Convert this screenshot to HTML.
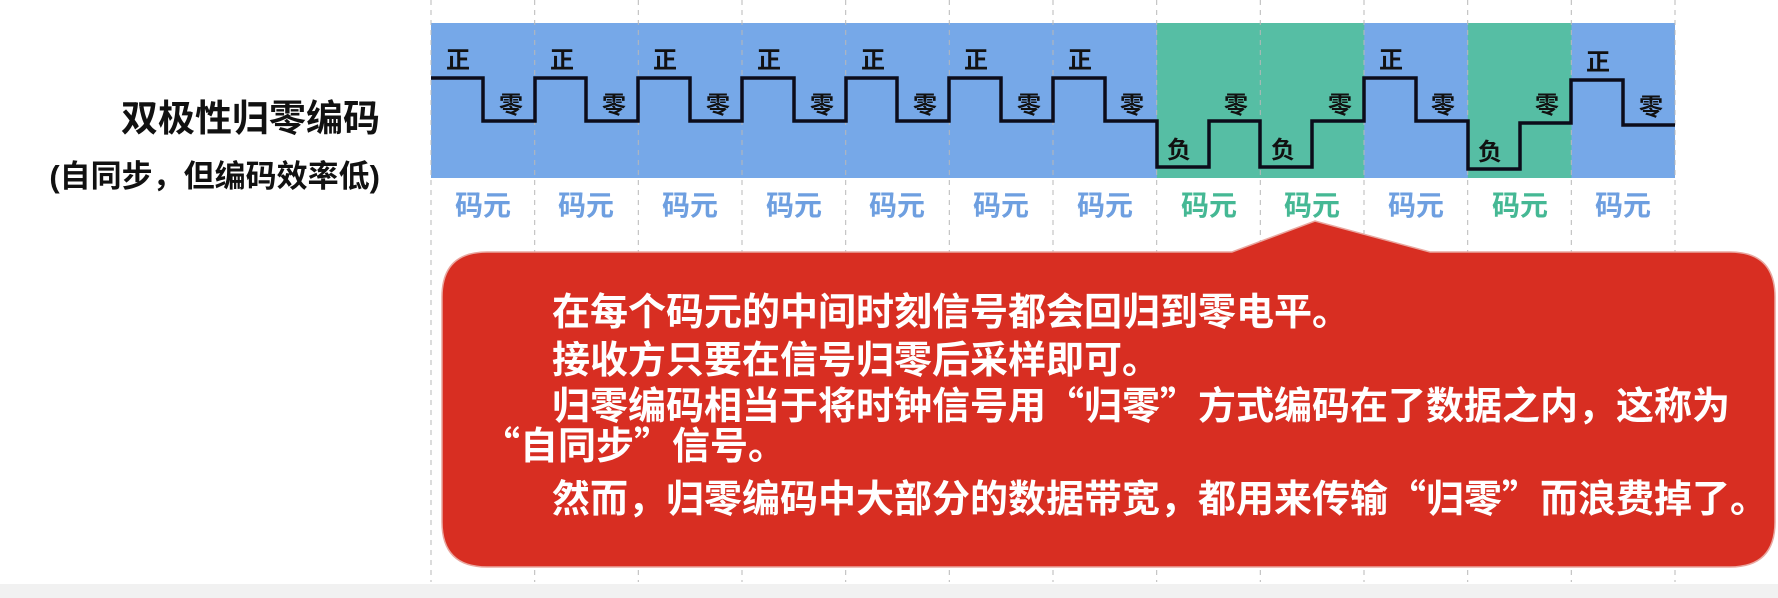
<!DOCTYPE html>
<html><head><meta charset="utf-8"><style>
body{margin:0;width:1778px;height:598px;overflow:hidden;background:#fff;font-family:"Liberation Sans","Noto Sans CJK SC",sans-serif;}
</style></head><body>
<svg width="1778" height="598" style="position:absolute;left:0;top:0" font-family="Noto Sans CJK SC, sans-serif" font-weight="bold">
<rect x="0" y="584" width="1778" height="14" fill="#f1f1f1"/>
<rect x="431" y="23" width="1244" height="155" fill="#76a8e8"/>
<rect x="1156.9" y="23" width="207.4" height="155" fill="#56bea4"/>
<rect x="1467.8" y="23" width="103.7" height="155" fill="#56bea4"/>
<g stroke="#b8b8b8" stroke-width="1" stroke-dasharray="5,5">
<line x1="431" y1="0" x2="431" y2="582"/><line x1="534.7" y1="0" x2="534.7" y2="582"/><line x1="638.3" y1="0" x2="638.3" y2="582"/><line x1="742" y1="0" x2="742" y2="582"/><line x1="845.7" y1="0" x2="845.7" y2="582"/><line x1="949.3" y1="0" x2="949.3" y2="582"/><line x1="1053" y1="0" x2="1053" y2="582"/><line x1="1156.7" y1="0" x2="1156.7" y2="582"/><line x1="1260.3" y1="0" x2="1260.3" y2="582"/><line x1="1364" y1="0" x2="1364" y2="582"/><line x1="1467.7" y1="0" x2="1467.7" y2="582"/><line x1="1571.3" y1="0" x2="1571.3" y2="582"/><line x1="1675" y1="0" x2="1675" y2="582"/>
</g>
<polyline fill="none" stroke="#0c0c1a" stroke-width="3.5" points="431,78 483,78 483,121 535,121 535,78 586,78 586,121 638,121 638,78 690,78 690,121 742,121 742,78 794,78 794,121 846,121 846,78 897,78 897,121 949,121 949,78 1001,78 1001,121 1053,121 1053,78 1105,78 1105,121 1157,121 1157,167 1209,167 1209,121 1260,121 1260,167 1312,167 1312,121 1364,121 1364,78 1416,78 1416,121 1468,121 1468,169 1520,169 1520,123 1571,123 1571,80 1623,80 1623,125 1675,125"/>
<g font-size="24" fill="#111" text-anchor="middle">
<text x="458" y="68">正</text><text x="562" y="68">正</text><text x="665" y="68">正</text><text x="769" y="68">正</text><text x="873" y="68">正</text><text x="976" y="68">正</text><text x="1080" y="68">正</text><text x="1391" y="68">正</text><text x="1598" y="70">正</text>
<text x="511" y="113">零</text><text x="614" y="113">零</text><text x="718" y="113">零</text><text x="822" y="113">零</text><text x="925" y="113">零</text><text x="1029" y="113">零</text><text x="1132" y="113">零</text><text x="1236" y="113">零</text><text x="1340" y="113">零</text><text x="1443" y="113">零</text><text x="1547" y="113">零</text><text x="1651" y="115">零</text>
<text x="1179" y="158">负</text><text x="1283" y="158">负</text><text x="1490" y="160">负</text>
</g>
<g font-size="28" text-anchor="middle" fill="#6e9fe0">
<text x="483" y="215">码元</text><text x="586" y="215">码元</text><text x="690" y="215">码元</text><text x="794" y="215">码元</text><text x="897" y="215">码元</text><text x="1001" y="215">码元</text><text x="1105" y="215">码元</text>
<text x="1209" y="215" fill="#45b894">码元</text><text x="1312" y="215" fill="#45b894">码元</text>
<text x="1416" y="215">码元</text><text x="1520" y="215" fill="#45b894">码元</text><text x="1623" y="215">码元</text>
</g>
<path d="M487,252 L1232,252 L1315,221 L1430,252 L1730,252 Q1775,252 1775,297 L1775,522 Q1775,567 1730,567 L487,567 Q442,567 442,522 L442,297 Q442,252 487,252 Z" fill="#d82e22" stroke="#e9a7a0" stroke-width="1.5"/>
<g text-anchor="end" fill="#111">
<text x="380" y="131" font-size="37">双极性归零编码</text>
<text x="380" y="187" font-size="31"><tspan font-family="Liberation Sans, sans-serif">(</tspan>自同步，但编码效率低<tspan font-family="Liberation Sans, sans-serif">)</tspan></text>
</g>
<g font-size="38" fill="#fff">
<text x="552" y="325">在每个码元的中间时刻信号都会回归到零电平。</text>
<text x="552" y="373">接收方只要在信号归零后采样即可。</text>
<text x="552" y="419">归零编码相当于将时钟信号用“归零”方式编码在了数据之内，这称为</text>
<text x="482" y="459">“自同步”信号。</text>
<text x="552" y="512">然而，归零编码中大部分的数据带宽，都用来传输“归零”而浪费掉了。</text>
</g>
</svg>
</body></html>
